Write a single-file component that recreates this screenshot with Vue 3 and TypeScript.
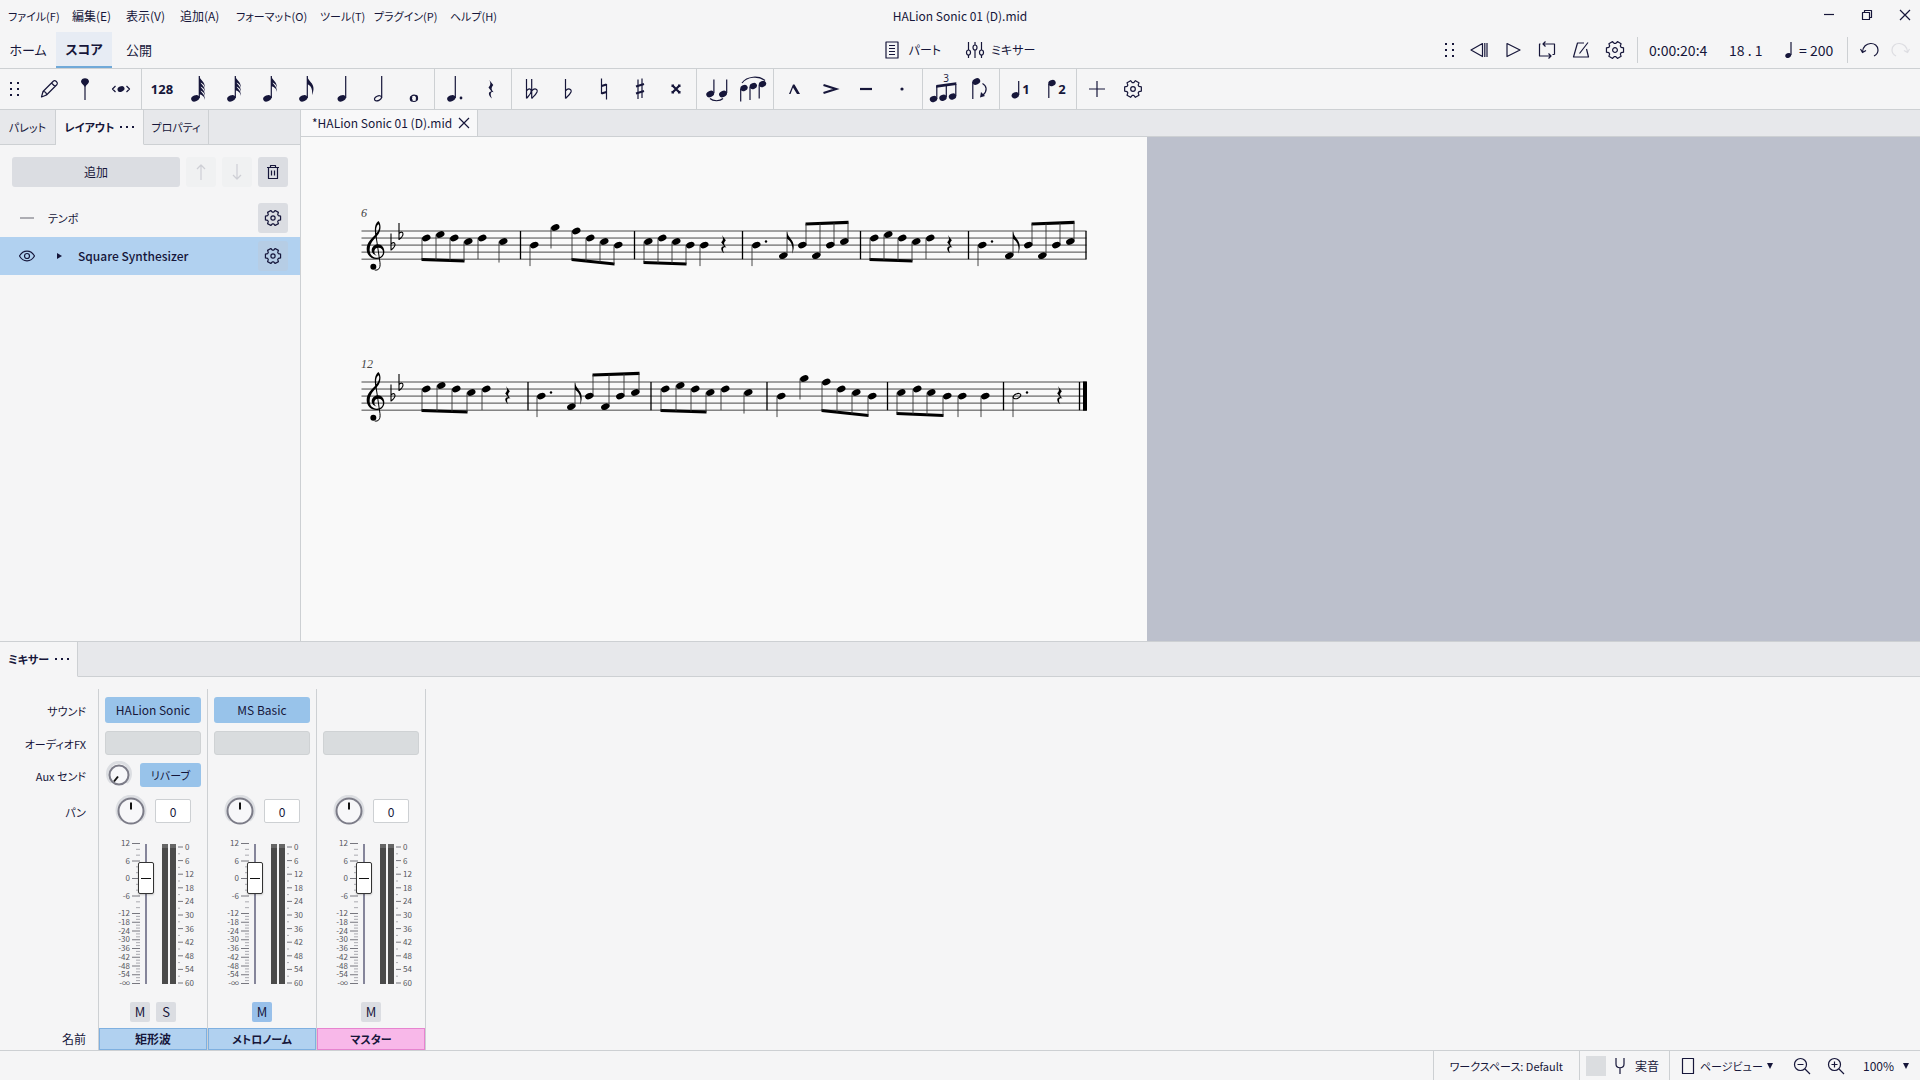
<script setup lang="ts">
import { ref } from 'vue'

interface Glyph {
  name: string
  fill?: string
  line?: string
  thick?: string
  text?: { x: number; y: number; size: number; value: string }
}

const rad = (deg: number) => (deg * Math.PI) / 180
const r2 = (n: number) => Math.round(n * 100) / 100

/* A tilted oval note head, as a closed path. */
function head(x: number, y: number, rx = 4.4, ry = 3) {
  const dx = rx * Math.cos(rad(24))
  const dy = rx * Math.sin(rad(24))
  return `M${r2(x - dx)} ${r2(y + dy)}A${rx} ${ry} -24 1 1 ${r2(x + dx)} ${r2(y - dy)}A${rx} ${ry} -24 1 1 ${r2(x - dx)} ${r2(y + dy)}Z`
}

function dot(x: number, y: number, r = 1.4) {
  return `M${x - r} ${y}a${r} ${r} 0 1 0 ${r * 2} 0a${r} ${r} 0 1 0 ${-r * 2} 0Z`
}

function gear(c: number, outer: number, inner: number) {
  const pts: string[] = []
  for (let k = 0; k < 6; k++) {
    for (const [a, r] of [[-23, inner], [-14, outer], [14, outer], [23, inner]]) {
      const t = rad(k * 60 + a)
      pts.push(`${r2(c + r * Math.cos(t))} ${r2(c + r * Math.sin(t))}`)
    }
  }
  return `M${pts.join('L')}Z${dot(c, c, outer * 0.27)}`
}

const gearPath = gear(10, 7.8, 5.9)

function flags(count: number) {
  let d = ''
  for (let i = 0; i < count; i++) {
    const y = 3 + i * 4
    d += count === 1
      ? `M17 ${y}C18 8 24 10 23.500 16C23.300 18 23 20 22 22C23 15 20 12 17 11Z`
      : `M17 ${y}C18 ${y + 4} 23 ${y + 5} 23 ${y + 12}C22 ${y + 8} 20 ${y + 7} 17 ${y + 6}Z`
  }
  return d
}

const restPath = 'M-5 -30L7 -14C0 -6 0 -2 9 8C0 4 -5 10 2 25C-11 15 -8 2 2 4L-7 -8C0 -15 0 -20 -5 -30Z'
const shortStem = 'M17.3 25V3'

const toolGroups: Glyph[][] = [
  [
    { name: '音符入力', line: 'M8.500 24L10 18.500L20.500 8C22 6.500 25.500 9.500 24 11.500L13.500 22Z M10 18.500C12 18.500 13.500 20 13.500 22 M18.500 10L22 13.500' },
    { name: 'ピン', fill: 'M16 14C13.500 11 12 10 12 8.500C12 4 20 4 20 8.500C20 10 18.500 11 16 14Z', line: 'M16 12V27' },
    { name: 'リピッチ', fill: head(16, 16, 3.6, 2.6), line: 'M10.500 13L7.500 16L10.500 19M21.500 13L24.500 16L21.500 19' },
  ],
  [
    { name: '128分音符', text: { x: 16, y: 21, size: 13, value: '128' } },
    { name: '64分音符', fill: head(13.3, 25.3, 4.3) + flags(4), line: shortStem },
    { name: '32分音符', fill: head(13.3, 25.3, 4.3) + flags(3), line: shortStem },
    { name: '16分音符', fill: head(13.3, 25.3, 4.3) + flags(2), line: shortStem },
    { name: '8分音符', fill: head(13.3, 25.3, 4.3) + flags(1), line: shortStem },
    { name: '4分音符', fill: head(15.7, 25.3, 4.3), line: 'M19.700 25V3' },
    { name: '2分音符', line: head(16, 25.3, 3.7, 2.2) + 'M19.700 25V3' },
    { name: '全音符', line: dot(16, 25.3, 3.2), thick: 'M13.500 23.500C12.500 25 13 27 14 28M18.500 27C19.500 25.500 19 23.500 18 22.700' },
  ],
  [
    { name: '付点', fill: head(12.3, 25.3, 4.3) + dot(22, 25), line: 'M16.300 25V3' },
    { name: '休符', fill: 'M14.300 7L18.300 12C16 15 16 16.500 19 19.500C16 18 14.500 20.500 17 25.500C12.500 22 13.500 18 16.500 18.500L13.500 14.500C15.800 12 15.800 10 14.300 7Z' },
  ],
  [
    { name: 'ダブルフラット', line: 'M10.500 6V25.500M10.500 18C13 14.500 16 16 15 19C14.500 21.500 12 23.500 10.500 25.500M15.700 6V25.500M15.700 18C18.500 14.500 22 16 21 19C20 21.500 17.500 23.500 15.700 25.500' },
    { name: 'フラット', line: 'M13.500 6V25.500M13.500 18C16 14.500 20 16 19 19C18 21.500 15.500 23.500 13.500 25.500' },
    { name: 'ナチュラル', line: 'M13.500 5.500V21M18.500 11V26.500', thick: 'M13.500 13L18.500 11.500M13.500 20.500L18.500 19' },
    { name: 'シャープ', line: 'M14 6.500V26M18 5.500V25', thick: 'M12 13.500L20 11M12 20.500L20 18' },
    { name: 'ダブルシャープ', thick: 'M12.500 12.500L19.500 19.500M19.500 12.500L12.500 19.500', fill: 'M11.500 11.500h2.500v2.500h-2.500ZM18 11.500h2.500v2.500h-2.500ZM11.500 18h2.500v2.500h-2.500ZM18 18h2.500v2.500h-2.500Z' },
  ],
  [
    { name: 'タイ', fill: head(9.2, 21, 4) + head(22, 21, 4), line: 'M12.900 20V6.500M25.700 20V6.500M9 25.500C12 28.500 19 28.500 22 25.500' },
    { name: 'スラー', fill: head(7, 15, 3.8) + head(16.3, 13, 3.8) + head(25.5, 11, 3.8), line: 'M3.700 16V28.500M13 14V27M22.200 12V25.500M5 10C10 3 22 2.500 28 7.500' },
  ],
  [
    { name: 'マルカート', fill: 'M11 21L15 11.500H16.500L22 21H19L15 14.500L12.500 21Z' },
    { name: 'アクセント', thick: 'M9.500 12L22 16L9.500 20' },
    { name: 'テヌート', thick: 'M10 16H22' },
    { name: 'スタッカート', fill: dot(16, 16, 1.6) },
  ],
  [
    { name: '連符', fill: head(6.5, 26, 3.8) + head(16, 24.8, 3.8) + head(25.5, 23.5, 3.8) + 'M9.200 12L29.300 9.300V12L9.200 14.700Z', line: 'M9.800 26V13M19.300 24V12M28.800 23V11', text: { x: 19, y: 9, size: 10, value: '3' } },
    { name: '反転', fill: head(13.3, 8.5, 4) + 'M17 24.500L18 19L22 23Z', line: 'M9.800 9V26M19.500 10.500C24 13 24.500 18 20 22' },
  ],
  [
    { name: '声部1', fill: head(11.3, 22.3, 3.8), line: 'M14.700 22V8', text: { x: 22, y: 21, size: 13, value: '1' } },
    { name: '声部2', fill: head(12, 10, 3.8), line: 'M8.800 11V25', text: { x: 22, y: 21, size: 13, value: '2' } },
  ],
  [
    { name: '追加', line: 'M8 16H24M16 8V24' },
    { name: 'ツールバーの設定', line: gear(16, 8.6, 6.5) },
  ],
]

/* Labels without kanji are set one size smaller. */
const isKana = (text: string) => !/[一-龯]/.test(text)

const menus = ['ファイル(F)', '編集(E)', '表示(V)', '追加(A)', 'フォーマット(O)', 'ツール(T)', 'プラグイン(P)', 'ヘルプ(H)']

const playback: Glyph[] = [
  { name: '巻き戻し', line: 'M13.500 3.500L2 10L13.500 16.500ZM15.800 3V17M18 3V17' },
  { name: '再生', line: 'M4 3.500L17 10L4 16.500Z' },
  { name: 'ループ', line: 'M6 4H17.500V14.500M14 16H2.500V4H3.500M8.500 1.500L6 4L8.500 6.500M11.500 13.500L14 16L11.500 18.500M17.500 14.500H15.500' },
  { name: 'メトロノーム', line: 'M13 3H6.500L2.500 17H17.500L15.500 9M8.500 13.500L17 2.500' },
  { name: '再生の設定', line: gear(10, 8.8, 6.7) },
]

/* Half-space positions counted down from the top staff line. */
const G5 = -1, F5 = 0, E5 = 1, D5 = 2, C5 = 3, B4 = 4, F4 = 7
const HALF = 3.52

interface Beam { xs: number[]; ps: number[]; y1: number; y2: number; up?: boolean }
interface Single { x: number; p: number; kind: 'quarter' | 'half' | 'eighth'; dot?: number }
interface Staff { top: number; number: string; bars: number[]; beams: Beam[]; singles: Single[]; rests: number[]; final?: boolean }

const q = (x: number, p: number, d?: number): Single => ({ x, p, kind: 'quarter', dot: d })
const down = (xs: number[], ps: number[], y1: number, y2: number): Beam => ({ xs, ps, y1, y2 })
const up = (xs: number[]): Beam => ({ xs, ps: [B4, F4, B4, C5], y1: -7, y2: -8.7, up: true })

const staves: Staff[] = [
  {
    top: 94, number: '6',
    bars: [219.5, 333.5, 441.5, 559.5, 667.5, 785],
    beams: [
      down([125, 139, 153, 167], [D5, E5, D5, C5], 28.5, 30),
      down([275, 289, 303, 317], [F5, D5, C5, B4], 28.5, 33),
      down([347, 361, 375, 389], [C5, D5, C5, B4], 31.5, 33),
      up([501, 515, 529, 543]),
      down([573, 587, 601, 615], [D5, E5, D5, C5], 28.5, 30),
      up([727, 741, 755, 769]),
    ],
    singles: [
      q(181, D5), q(202, C5), q(233, B4), q(254, G5), q(403, B4),
      q(455, B4, 10), { x: 482, p: F4, kind: 'eighth' }, q(629, D5),
      q(681, B4, 10), { x: 708, p: F4, kind: 'eighth' },
    ],
    rests: [422.5, 648.5],
  },
  {
    top: 245, number: '12',
    bars: [227, 350, 466, 586.5, 702.5, 778.5],
    beams: [
      down([125, 140, 155, 170], [D5, E5, D5, C5], 28.5, 30),
      up([288, 304, 319, 334]),
      down([364, 379, 394, 409], [D5, E5, D5, C5], 28.5, 30),
      down([525, 540, 555, 571], [F5, D5, C5, B4], 28.5, 33.5),
      down([600, 616, 630, 646], [C5, D5, C5, B4], 31.5, 33.5),
    ],
    singles: [
      q(185, D5), q(240, B4, 10), { x: 270, p: F4, kind: 'eighth' },
      q(424, D5), q(447, C5), q(480, B4), q(503, G5), q(661, B4), q(684, B4),
      { x: 716, p: B4, kind: 'half', dot: 10 },
    ],
    rests: [206.5, 758.5],
    final: true,
  },
]

function beamPath(b: Beam) {
  const off = b.up ? 4 : -4
  const x1 = b.xs[0] + off - 0.5
  const x2 = b.xs[b.xs.length - 1] + off + 0.5
  return `M${x1} ${b.y1 - 1.6}L${x2} ${b.y2 - 1.6}V${b.y2 + 1.6}L${x1} ${b.y1 + 1.6}Z`
}

function stemPath(b: Beam) {
  const off = b.up ? 4 : -4
  return b.xs.map((x, i) => {
    const end = b.y1 + ((b.y2 - b.y1) * i) / (b.xs.length - 1)
    return `M${x + off} ${b.ps[i] * HALF}V${r2(end)}`
  }).join('')
}

function singleStem(n: Single) {
  return n.kind === 'eighth' ? `M${n.x + 4} ${n.p * HALF}v-24` : `M${n.x - 4} ${n.p * HALF}v21`
}

/* Fader scale: six decibels take 17.5 units above -12 and half of that below. */
const faderMarks = ['12', '6', '0', '-6', '-12', '-18', '-24', '-30', '-36', '-42', '-48', '-54', '-∞']
  .map((label, i) => ({ label, y: (i <= 4 ? i * 17.5 : 70 + (i - 4) * 8.75) - 0.5 }))
const faderMinor: number[] = []
faderMarks.slice(0, -1).forEach((m, i) => {
  const gap = faderMarks[i + 1].y - m.y
  faderMinor.push(m.y + gap / 3, m.y + (gap * 2) / 3)
})
const meterMarks = Array.from({ length: 11 }, (_, i) => ({ label: String(i * 6), y: 3 + i * 13.6 }))

interface Strip { name: string; sound?: string; aux?: boolean; solo?: boolean; muted?: boolean; master?: boolean; pan: string; level: number }
const strips = ref<Strip[]>([
  { name: '矩形波', sound: 'HALion Sonic', aux: true, solo: true, pan: '0', level: 90 },
  { name: 'メトロノーム', sound: 'MS Basic', muted: true, pan: '0', level: 90 },
  { name: 'マスター', master: true, pan: '0', level: 90 },
])
const viewMode = ref('page')
const zoom = ref('100')
</script>

<template>
  <div class="app">
    <header class="titlebar">
      <nav class="menus">
        <button v-for="m in menus" :key="m" :class="{ kana: isKana(m) }">{{ m }}</button>
      </nav>
      <div class="title">HALion Sonic 01 (D).mid</div>
      <div class="window-buttons">
        <button aria-label="最小化"><svg width="14" height="14"><path d="M2 6.500H12" /></svg></button>
        <button aria-label="元に戻す"><svg width="14" height="14"><path d="M2.500 4.500H9.500V11.500H2.500ZM4.500 4.500V2.500H11.500V9.500H9.500" /></svg></button>
        <button aria-label="閉じる"><svg width="14" height="14"><path d="M2 2L12 12M12 2L2 12" /></svg></button>
      </div>
    </header>

    <div class="mainbar">
      <nav class="pages">
        <button>ホーム</button>
        <button class="active">スコア</button>
        <button>公開</button>
      </nav>
      <div class="views">
        <button>
          <svg width="14" height="18"><path d="M1 1H13V17H1ZM4 4.500H10M4 7.500H10M4 10.500H10M4 13.500H10" /></svg>パート
        </button>
        <button>
          <svg width="20" height="18"><path d="M3.500 1V9M3.500 14V17M10 1V4M10 9V17M16.500 1V9M16.500 14V17M1.500 11.500a2 2.500 0 1 0 4 0a2 2.500 0 1 0 -4 0M8 6.500a2 2.500 0 1 0 4 0a2 2.500 0 1 0 -4 0M14.500 11.500a2 2.500 0 1 0 4 0a2 2.500 0 1 0 -4 0" /></svg>ミキサー
        </button>
      </div>
      <div class="transport">
        <svg class="grip" width="12" height="16"><path d="M1 1h2v2H1ZM8 1h2v2H8ZM1 7h2v2H1ZM8 7h2v2H8ZM1 13h2v2H1ZM8 13h2v2H8Z" /></svg>
        <button v-for="p in playback" :key="p.name" class="play-button" :aria-label="p.name">
          <svg width="20" height="20"><path :d="p.line" /></svg>
        </button>
        <div class="readout">
          <span class="time">0:00:20:4</span>
          <span class="beat">18 . 1</span>
          <span class="tempo">
            <svg width="8" height="18"><path class="solid" :d="head(3.2, 14.5, 3, 2.3)" /><path d="M6 14V1" /></svg>= 200
          </span>
        </div>
        <button class="history" aria-label="元に戻す"><svg width="20" height="20"><path d="M2.500 12C3 1 18 1 18 10C18 13 16 15 14 16M0.500 9L2.500 12.500L6 10.500" /></svg></button>
        <button class="history" aria-label="やり直し" disabled><svg width="20" height="20"><path d="M17.500 12C17 1 2 1 2 10C2 13 4 15 6 16M19.500 9L17.500 12.500L14 10.500" /></svg></button>
      </div>
    </div>

    <div class="toolbar">
      <svg class="grip" width="12" height="16"><path d="M1 1h2v2H1ZM8 1h2v2H8ZM1 7h2v2H1ZM8 7h2v2H8ZM1 13h2v2H1ZM8 13h2v2H8Z" /></svg>
      <div v-for="(group, i) in toolGroups" :key="i" class="tool-group">
        <button v-for="g in group" :key="g.name" class="tool" :aria-label="g.name">
          <svg width="32" height="32">
            <path v-if="g.line" :d="g.line" />
            <path v-if="g.thick" class="thick" :d="g.thick" />
            <path v-if="g.fill" class="solid" :d="g.fill" />
            <text v-if="g.text" :x="g.text.x" :y="g.text.y" :font-size="g.text.size" :class="{ light: g.text.size < 12 }">{{ g.text.value }}</text>
          </svg>
        </button>
      </div>
    </div>

    <main class="workspace">
      <aside class="panel">
        <div class="panel-tabs">
          <button class="kana palettes">パレット</button>
          <button class="kana active layout">レイアウト<i class="more"></i></button>
          <button class="kana properties">プロパティ</button>
          <span class="rest"></span>
        </div>
        <div class="panel-actions">
          <button class="flat add">追加</button>
          <button class="flat square" aria-label="上へ" disabled><svg width="20" height="20"><path d="M10 18V3M6 7L10 3L14 7" /></svg></button>
          <button class="flat square" aria-label="下へ" disabled><svg width="20" height="20"><path d="M10 2V17M6 13L10 17L14 13" /></svg></button>
          <button class="flat square" aria-label="削除"><svg width="20" height="20"><path d="M4 5.500H16M5.500 5.500V16.500H14.500V5.500M7.500 5V3.500H12.500V5M8.500 8.500V13.500M11.500 8.500V13.500" /></svg></button>
        </div>
        <ul class="tree">
          <li>
            <svg class="state" width="16" height="16"><path class="dash" d="M1 8H15" /></svg>
            <span class="item-name kana">テンポ</span>
            <button class="flat square" aria-label="テンポの設定"><svg width="20" height="20"><path :d="gearPath" /></svg></button>
          </li>
          <li class="selected">
            <svg class="state" width="16" height="16"><path d="M0.500 8C4 1.500 12 1.500 15.500 8C12 14.500 4 14.500 0.500 8Z" /><circle cx="8" cy="8" r="2.500" /></svg>
            <svg class="arrow" width="6" height="8"><path class="solid" d="M1 1L6 4L1 7Z" /></svg>
            <span class="item-name">Square Synthesizer</span>
            <button class="flat square" aria-label="楽器の設定"><svg width="20" height="20"><path :d="gearPath" /></svg></button>
          </li>
        </ul>
      </aside>

      <section class="document">
        <div class="doc-tabs">
          <div class="doc-tab">
            <span>*HALion Sonic 01 (D).mid</span>
            <button aria-label="タブを閉じる"><svg width="12" height="12"><path d="M1 1L11 11M11 1L1 11" /></svg></button>
          </div>
        </div>
        <div class="canvas">
          <div class="page">
            <svg class="score" width="846" height="340">
              <g v-for="s in staves" :key="s.number" :transform="`translate(0 ${s.top})`">
                <text x="60" y="-14">{{ s.number }}</text>
                <path v-for="n in 5" :key="n" class="staff-line" :d="`M60.500 ${(n - 1) * HALF * 2}H785.500`" />
                <path v-for="b in s.bars" :key="b" class="bar-line" :d="`M${b} 0V28.200`" />
                <path v-if="s.final" d="M782 -0.500H786V28.700H782Z" />

                <g transform="translate(49 -41) scale(0.3333)">
                  <path fill-rule="evenodd" d="M85 93C93 100 94 118 86 131C78 144 60 154 59 178C58 194 68 203 80 203C92 203 99 196 99 186C99 178 93 173 86 173C77 173 73 178 73 185C73 190 76 194 81 197C71 195 65 189 65 181C65 171 74 163 84 163C95 163 103 173 103 185C103 199 92 207 79 207C63 207 50 195 50 177C50 157 66 144 76 134C73 118 74 102 85 93ZM86 103C80 106 77 116 79 130C87 122 90 110 86 103Z" />
                  <path class="clef-stem" d="M77 130L90 218C92 236 84 242 74 240" />
                  <circle cx="70" cy="230" r="9" />
                </g>
                <g v-for="f in [[90, 14], [98, 3.5]]" :key="f[0]" :transform="`translate(${f[0]} ${f[1]})`">
                  <path class="outline" d="M0 -11.500V5C2 3.500 4 1.500 4 -0.500C4 -3 1.500 -3 0 -0.800" />
                </g>

                <template v-for="(b, i) in s.beams" :key="i">
                  <path :d="beamPath(b)" />
                  <path class="stem" :d="stemPath(b)" />
                  <path v-for="(x, k) in b.xs" :key="k" :d="head(x + 0.3, b.ps[k] * HALF)" />
                </template>
                <template v-for="n in s.singles" :key="n.x">
                  <path class="stem" :d="singleStem(n)" />
                  <path :class="{ outline: n.kind === 'half' }" :d="n.kind === 'half' ? head(n.x, n.p * HALF, 4, 2.2) : head(n.x + 0.3, n.p * HALF)" />
                  <path v-if="n.kind === 'eighth'" :transform="`translate(${n.x + 4} ${n.p * HALF - 24})`" d="M0 0C1 6 7 8 6.700 15C6.600 18 6 20 5 22C6.500 16 5 10 0 7Z" />
                  <path v-if="n.dot" :d="dot(n.x + n.dot, n.p * HALF - HALF, 1.2)" />
                </template>
                <g v-for="x in s.rests" :key="x" :transform="`translate(${x} 14) scale(0.3333)`">
                  <path :d="restPath" />
                </g>
              </g>
            </svg>
          </div>
        </div>
      </section>
    </main>

    <section class="mixer">
      <div class="mixer-tabs">
        <button class="kana active">ミキサー<i class="more"></i></button>
        <span class="rest"></span>
      </div>
      <div class="mixer-body">
        <div class="strip-grid labels">
          <span class="kana">サウンド</span>
          <span class="kana">オーディオFX</span>
          <span class="kana">Aux センド</span>
          <span class="kana">パン</span>
          <span></span>
          <span></span>
          <span>名前</span>
        </div>
        <div v-for="s in strips" :key="s.name" class="strip-grid strip">
          <div class="cell"><button v-if="s.sound" class="slot blue sound">{{ s.sound }}</button></div>
          <div class="cell"><button class="slot empty" :aria-label="`${s.name} オーディオFX`"></button></div>
          <div class="cell aux">
            <template v-if="s.aux">
              <label class="knob">
                <input type="range" :aria-label="`${s.name} センド量`" value="0">
                <svg width="28" height="28"><path class="halo" d="M6.500 21.500A11.500 11.500 0 1 1 21.500 21.500" /><circle cx="14" cy="14" r="9.500" /><path class="needle" d="M13 15.500L9 20.500" /></svg>
              </label>
              <button class="slot blue reverb kana">リバーブ</button>
            </template>
          </div>
          <div class="cell pan">
            <label class="knob">
              <input type="range" :aria-label="`${s.name} パン`" min="-100" max="100" value="0">
              <svg width="32" height="32"><path class="halo" d="M6.500 25.500A14 14 0 1 1 25.500 25.500" /><circle cx="16" cy="16" r="12.500" /><path class="needle" d="M16 7.500V14.500" /></svg>
            </label>
            <input v-model="s.pan" class="pan-value" type="text" :aria-label="`${s.name} パン値`">
          </div>
          <div class="cell fader">
            <svg class="scale" width="36" height="140">
              <template v-for="m in faderMarks" :key="m.label">
                <path :d="`M27 ${m.y}H35`" />
                <text x="25" :y="m.y + 2.500" text-anchor="end">{{ m.label }}</text>
              </template>
              <path v-for="y in faderMinor" :key="y" class="minor" :d="`M31 ${y}H35`" />
            </svg>
            <input v-model="s.level" class="level" type="range" min="0" max="108" :aria-label="`${s.name} 音量`">
            <div class="meter"></div>
            <div class="meter second"></div>
            <svg class="scale" width="22" height="140">
              <template v-for="m in meterMarks" :key="m.label">
                <path :d="`M2 ${m.y}H7`" />
                <text x="9" :y="m.y + 3">{{ m.label }}</text>
                <path v-if="m.y < 130" class="minor" :d="`M2 ${m.y + 6.800}H4`" />
              </template>
            </svg>
          </div>
          <div class="cell toggles">
            <button class="toggle" :class="{ on: s.muted }">M</button>
            <button v-if="s.solo" class="toggle">S</button>
          </div>
          <div class="strip-name" :class="{ master: s.master, kana: isKana(s.name) }">{{ s.name }}</div>
        </div>
      </div>
    </section>

    <footer class="status">
      <button class="workspace-name kana">ワークスペース: Default</button>
      <label class="concert">
        <input type="checkbox">
        <svg width="12" height="18"><path d="M2 1V7C2 12 10 12 10 7V1M6 11V17" /></svg>
        <span>実音</span>
      </label>
      <div class="view-controls">
        <label class="view-mode">
          <svg width="14" height="18"><path d="M1.500 1.500H12.500V16.500H1.500Z" /></svg>
          <select v-model="viewMode" class="kana" aria-label="表示モード"><option value="page">ページビュー</option></select>
          <svg class="caret" width="6" height="6"><path class="solid" d="M0 0H6L3 6Z" /></svg>
        </label>
        <button aria-label="縮小"><svg width="18" height="18"><circle cx="7.500" cy="7.500" r="6" /><path d="M12 12L17 17M4.500 7.500H10.500" /></svg></button>
        <button aria-label="拡大"><svg width="18" height="18"><circle cx="7.500" cy="7.500" r="6" /><path d="M12 12L17 17M4.500 7.500H10.500M7.500 4.500V10.500" /></svg></button>
        <label class="zoom">
          <select v-model="zoom" aria-label="ズーム"><option value="100">100%</option></select>
          <svg class="caret" width="6" height="6"><path class="solid" d="M0 0H6L3 6Z" /></svg>
        </label>
      </div>
    </footer>
  </div>
</template>

<style>
body {
  margin: 0;
  background: #f5f5f6;
}
</style>

<style scoped>
.app {
  --ink: #16163a;
  --line: #cdd0d3;
  --strip: #e7e8eb;
  display: flex;
  flex-direction: column;
  min-height: 100vh;
  background: #f5f5f6;
  color: var(--ink);
  font: 12px/16px "Noto Sans CJK JP", sans-serif;
  font-feature-settings: "palt";
}

.app *,
.app *::before {
  box-sizing: border-box;
}

button,
input,
select {
  margin: 0;
  padding: 0;
  border: 0;
  border-radius: 0;
  background: none;
  color: inherit;
  font: inherit;
  font-feature-settings: inherit;
  white-space: nowrap;
}

.kana {
  font-size: 11px;
}

svg {
  display: block;
  flex: none;
  fill: none;
  stroke: var(--ink);
  stroke-width: 1.2;
  stroke-linejoin: round;
}

svg .solid {
  fill: var(--ink);
  stroke: none;
}

.titlebar,
.mainbar {
  display: grid;
  grid-template-columns: 1fr auto 1fr;
  align-items: center;
}

.titlebar {
  height: 32px;
}

.menus {
  display: grid;
  grid-template-columns: 64px 54px 54px 56px 84px 54px 76px auto;
  justify-content: start;
  justify-items: start;
  padding-left: 8px;
}

.window-buttons {
  display: flex;
  justify-content: flex-end;
  gap: 24px;
  padding: 0 8px 2px 0;
}

.mainbar {
  height: 37px;
  border-bottom: 1px solid var(--line);
}

.pages {
  display: flex;
  height: 36px;
  font-size: 13px;
}

.pages button {
  width: 56px;
}

.pages .active {
  border-bottom: 2px solid #70a9d8;
  background: #e7ecf4;
  font-weight: 700;
}

.pages button:last-child {
  width: 54px;
}

.views {
  display: flex;
  gap: 24px;
}

.views button {
  display: flex;
  align-items: center;
  gap: 10px;
}

.views button:last-child {
  gap: 6px;
}

.transport {
  display: flex;
  align-items: center;
  justify-content: flex-end;
  padding-right: 10px;
}

svg.grip {
  fill: var(--ink);
  stroke: none;
}

.play-button {
  display: flex;
  width: 34px;
  justify-content: center;
}

.transport .grip {
  margin-right: 6px;
}

.readout {
  display: flex;
  align-items: center;
  width: 211px;
  height: 26px;
  margin: 0 12px 0 5px;
  padding-left: 11px;
  border: solid var(--line);
  border-width: 0 1px;
  font-size: 14px;
}

.time {
  width: 80px;
}

.beat {
  width: 56px;
}

.tempo {
  display: flex;
  align-items: center;
  gap: 6px;
}

.history {
  display: flex;
}

.history + .history {
  margin-left: 10px;
}

.history:disabled {
  opacity: 0.1;
}

.toolbar {
  display: flex;
  height: 41px;
  border-bottom: 1px solid var(--line);
}

.toolbar .grip {
  align-self: center;
  margin: 0 11px 0 9px;
}

.tool-group {
  display: flex;
  align-items: center;
  gap: 4px;
  padding: 0 4px;
  border-right: 1px solid var(--line);
}

.tool-group:nth-child(2) {
  padding-left: 1px;
}

.tool-group:last-child {
  border: 0;
}

.tool svg {
  overflow: visible;
}

.tool svg .thick {
  stroke-width: 2.2;
  stroke-linejoin: miter;
}

.tool svg text {
  fill: var(--ink);
  stroke: none;
  font-family: "Open Sans", sans-serif;
  font-weight: 700;
  text-anchor: middle;
}

.tool svg .light {
  font-weight: 400;
}

.workspace {
  display: flex;
  flex: 1;
}

.panel {
  width: 301px;
  flex: none;
  border-right: 1px solid var(--line);
}

.panel-tabs,
.mixer-tabs {
  display: flex;
  height: 35px;
}

.panel-tabs button,
.mixer-tabs button {
  display: flex;
  align-items: center;
  justify-content: center;
  border: solid var(--line);
  border-width: 0 1px 1px 0;
  background: var(--strip);
}

.panel-tabs .palettes {
  width: 56px;
}

.panel-tabs .layout {
  width: 88px;
}

.panel-tabs .properties {
  width: 65px;
}

.mixer-tabs button {
  width: 78px;
}

.panel-tabs .active,
.mixer-tabs .active {
  border-bottom-color: transparent;
  background: none;
  font-weight: 700;
}

.rest {
  flex: 1;
  border-bottom: 1px solid var(--line);
  background: var(--strip);
}

.more {
  width: 2px;
  height: 2px;
  margin: 0 6px 0 12px;
  background: var(--ink);
  box-shadow: -6px 0 var(--ink), 6px 0 var(--ink);
}

.panel-actions {
  display: flex;
  gap: 6px;
  padding: 12px;
}

.flat {
  border-radius: 3px;
  background: #dbdde2;
}

.add {
  flex: 1;
}

.square {
  display: flex;
  align-items: center;
  justify-content: center;
  width: 30px;
  height: 30px;
}

.flat:disabled {
  background: #f0f1f2;
}

.flat:disabled svg {
  opacity: 0.15;
}

.tree {
  margin: 0;
  padding: 0;
  list-style: none;
}

.tree li {
  display: flex;
  align-items: center;
  height: 38px;
  padding: 0 12px 0 19px;
}

.tree .selected {
  background: #b1d1f0;
  font-weight: 500;
}

.state {
  margin-right: 13px;
}

.state .dash {
  stroke: #7d7d88;
}

.arrow {
  margin: 0 16px 0 8px;
}

.item-name {
  flex: 1;
}

.selected .flat {
  background: #b6cde5;
}

.document {
  display: flex;
  flex: 1;
  flex-direction: column;
  min-width: 0;
}

.doc-tabs {
  display: flex;
  height: 27px;
  border-bottom: 1px solid var(--line);
  background: var(--strip);
}

.doc-tab {
  display: flex;
  align-items: center;
  gap: 6px;
  padding: 0 7px 0 11px;
  border-right: 1px solid var(--line);
  background: #f8f8f9;
}

.canvas {
  display: flex;
  flex: 1;
  background: #bcc0cc;
}

.page {
  background: #f9f9f9;
}

.score {
  fill: #000;
  stroke: none;
}

.score text {
  fill: #444;
  font: italic 12px "Liberation Serif", serif;
}

.score .staff-line {
  stroke: #333;
  stroke-width: 0.9;
}

.score .bar-line {
  stroke: #000;
  stroke-width: 1.3;
}

.score .stem {
  stroke: #333;
  stroke-width: 0.9;
}

.score .outline {
  fill: none;
  stroke: #000;
  stroke-width: 1.1;
}

.score .clef-stem {
  fill: none;
  stroke: #000;
  stroke-width: 3;
}

.mixer {
  border-top: 1px solid var(--line);
}

.mixer-body {
  display: flex;
  padding-top: 12px;
}

.strip-grid {
  display: grid;
  grid-template-rows: 28px 26px 26px 34px 161px 20px 22px;
  row-gap: 6px;
  padding-top: 8px;
}

.labels {
  width: 98px;
  padding-right: 12px;
  text-align: right;
  align-items: center;
}

.strip {
  width: 109px;
  border-left: 1px solid var(--line);
}

.strip:last-child {
  width: 110px;
  border-right: 1px solid var(--line);
}

.cell {
  display: flex;
  align-self: start;
  padding: 0 6px;
}

.slot {
  width: 100%;
  height: 24px;
  border-radius: 3px;
}

.sound {
  height: 26px;
}

.blue {
  background: #98c3ea;
}

.empty {
  border: 1px solid #cfd2d4;
  background: #d9dcde;
}

.aux {
  align-items: center;
  height: 24px;
}

.aux .reverb {
  width: 61px;
}

.aux .knob {
  margin-right: 7px;
}

.knob {
  position: relative;
}

.knob input {
  position: absolute;
  inset: 0;
  width: 100%;
  height: 100%;
  opacity: 0;
}

.knob circle {
  fill: #f7f7f9;
  stroke: #7c7c88;
  stroke-width: 2;
}

.knob .halo {
  stroke: #dcdee2;
  stroke-width: 3;
}

.knob .needle {
  stroke: #111;
  stroke-width: 2;
}

.pan {
  align-items: center;
  justify-content: center;
  gap: 8px;
}

.pan-value {
  width: 36px;
  height: 24px;
  border: 1px solid var(--line);
  border-radius: 2px;
  background: #fff;
  text-align: center;
}

.fader {
  align-items: flex-start;
  padding-top: 9px;
}

.scale {
  overflow: visible;
  stroke: #77777f;
  stroke-width: 1;
}

.scale .minor {
  stroke: #aaaab0;
}

.scale text {
  fill: #55555c;
  stroke: none;
  font-size: 8px;
}

.level {
  width: 16px;
  height: 140px;
  margin: 0 8px 0 -3px;
  appearance: none;
  writing-mode: vertical-lr;
  direction: rtl;
  background: linear-gradient(#85859a, #85859a) center / 2px 100% no-repeat;
}

.level::-webkit-slider-thumb {
  width: 16px;
  height: 32px;
  appearance: none;
  border: 1px solid #333;
  border-radius: 2px;
  background: linear-gradient(#111, #111) center / 10px 1px no-repeat #fff;
  box-shadow: 0 1px 2px #0003;
}

.meter {
  width: 6px;
  height: 140px;
  border-top: 4px solid #666;
  background: #4a4a4a;
}

.meter.second {
  margin-left: 2px;
}

.toggles {
  justify-content: center;
  gap: 6px;
}

.toggle {
  width: 20px;
  height: 20px;
  border-radius: 2px;
  background: #dbdde2;
  font-size: 13px;
}

.toggle.on {
  background: #98c0ea;
}

.strip-name {
  border: 1px solid #7fb0e0;
  background: #b1d1f0;
  font-weight: 700;
  line-height: 20px;
  text-align: center;
}

.strip-name.master {
  border-color: #e684cf;
  background: #f8b8e9;
}

.status {
  display: flex;
  justify-content: flex-end;
  height: 30px;
  border-top: 1px solid var(--line);
}

.status > * {
  display: flex;
  align-items: center;
  border-left: 1px solid var(--line);
}

.status .workspace-name {
  padding: 0 16px;
}

.concert {
  padding: 0 10px 0 6px;
}

.concert input {
  width: 20px;
  height: 20px;
  margin-right: 8px;
  appearance: none;
  background: #dbdde0;
}

.concert span {
  margin-left: 9px;
}

.view-controls {
  padding: 0 11px 0 11px;
}

.view-mode,
.zoom {
  display: flex;
  align-items: center;
}

.view-controls select {
  appearance: none;
}

.view-mode select {
  margin: 0 3px 0 5px;
}

.view-controls button {
  margin-left: 16px;
}

.view-controls .view-mode + button {
  margin-left: 20px;
}

.zoom select {
  margin: 0 8px 0 18px;
}
</style>
